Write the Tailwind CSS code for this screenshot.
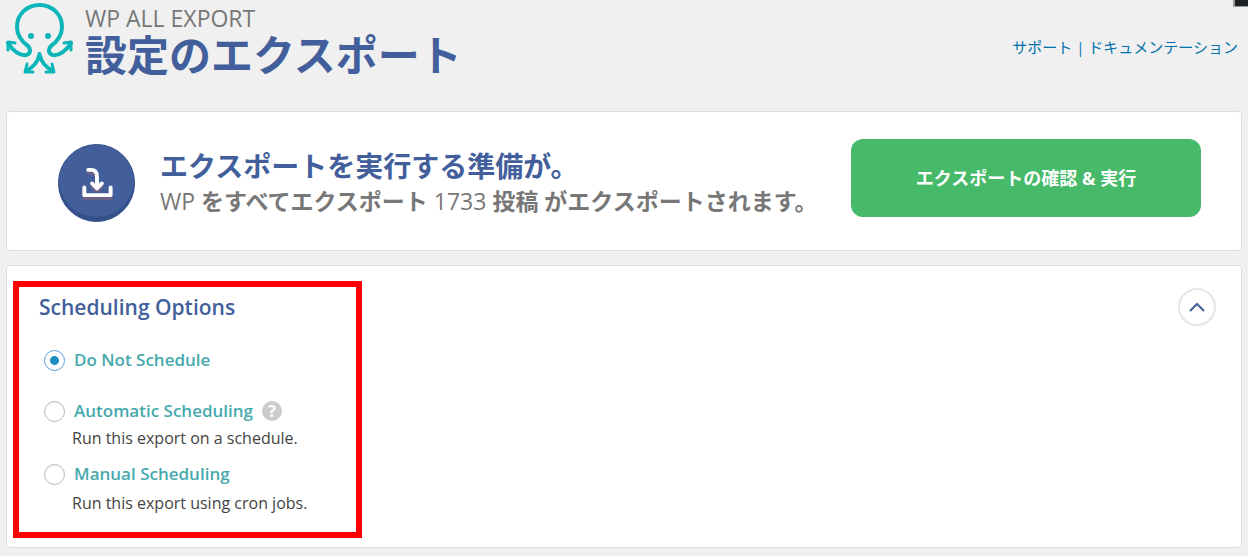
<!DOCTYPE html>
<html lang="ja">
<head>
    <meta charset="UTF-8">
    <meta name="viewport" content="width=device-width, initial-scale=1.0">
    <title>WP All Export</title>
    <script src="https://cdn.jsdelivr.net/npm/@tailwindcss/browser@4"></script>
</head>
<body class="bg-[#f0f0f0] font-['Open_Sans','Noto_Sans_CJK_JP',sans-serif] text-[#444]">
    <div class="relative min-h-screen px-[6px] pb-2 overflow-hidden">
        <!-- Screen options tab corner -->
        <div class="absolute top-0 right-0 w-[15px] h-[7px] bg-[#1d2022] border-l-2 border-b border-[#999]"></div>

        <!-- Header -->
        <header class="flex items-start justify-between h-[111px]">
            <div class="flex items-start gap-[11px]">
                <svg class="w-[68px] h-[74px] shrink-0" viewBox="6 0 68 74" fill="none" stroke="#0cb5b8" stroke-width="4" stroke-linecap="round" stroke-linejoin="round">
                    <path d="M8 43C13 51 20 56 26 55C31 54 31 49 28 46C21 41 17 35 17 27C17 14 27 5 39.500 5C52 5 62 14 62 27C62 35 58 41 51 46C48 49 48 54 53 55C59 56 66 51 71 43"/>
                    <path d="M8 50V42L15 43M71 50V42L64 43" stroke-width="3"/>
                    <path d="M39.500 54C38 62 34 67 26 71M39.500 54C41 62 45 67 53 71"/>
                    <path d="M27 64L25 72H33M52 64L54 72H46" stroke-width="3"/>
                    <circle cx="31" cy="36" r="3" fill="#0cb5b8" stroke="none"/>
                    <circle cx="48" cy="36" r="3" fill="#0cb5b8" stroke="none"/>
                </svg>
                <div class="pt-[6px]">
                    <p class="text-[23px] leading-[24px] text-[#777]">WP ALL EXPORT</p>
                    <h1 class="text-[42px] leading-[50px] font-bold text-[#425f9c]">設定のエクスポート</h1>
                </div>
            </div>
            <div class="pt-9 pr-1 text-[15px] leading-[22px] text-[#0073aa] whitespace-nowrap">
                <a href="#">サポート</a> | <a href="#">ドキュメンテーション</a>
            </div>
        </header>

        <main class="flex flex-col gap-[14px]">
            <!-- Ready to run -->
            <section class="flex items-start h-[140px] pt-[27px] pl-[51px] pr-[40px] bg-white border border-[#ddd] rounded-[4px]">
                <div class="mt-[5px] mr-[25px] w-[77px] h-[78px] shrink-0 rounded-full bg-[#425f9c] border border-[#34508a] shadow-[inset_0_-4px_0_#34508a]">
                    <svg class="size-full" viewBox="0 0 77 77" fill="none" stroke-linecap="round" stroke-linejoin="round">
                        <path d="M30 28H33Q39 28 39 35V46M34 42L39 47L44 42M26 46V54H53V46" stroke="#6b6187" stroke-width="4"/>
                        <path d="M30 25H33Q39 25 39 32V43M34 39L39 44L44 39M26 43V51H53V43" stroke="#fff" stroke-width="4"/>
                    </svg>
                </div>
                <div class="grow pt-[9px] whitespace-nowrap">
                    <h2 class="text-[28px] leading-[36px] font-bold text-[#425f9c]">エクスポートを実行する準備が。</h2>
                    <p class="text-[23px] leading-[34px] font-bold text-[#777]"><span class="font-medium">WP</span> をすべてエクスポート <span class="font-medium">1733</span> 投稿 がエクスポートされます。</p>
                </div>
                <button type="button" class="w-[350px] h-[78px] shrink-0 rounded-[12px] bg-[#46ba69] text-white text-[18px] font-bold">エクスポートの確認 &amp; 実行</button>
            </section>

            <!-- Scheduling -->
            <section class="flex items-start justify-between pl-[6px] pt-[15px] pb-[9px] pr-[25px] bg-white border border-[#ddd] rounded-[4px]">
                <div class="w-[349px] h-[257px] pt-[6px] pl-[19px] border-[6px] border-[#f00]">
                    <h2 class="pl-px text-[21px] leading-[28px] font-semibold text-[#425f9c]">Scheduling Options</h2>
                    <div class="mt-[28px] pl-[6px] text-[17px] leading-[22px] font-semibold text-[#46aaad]">
                        <label class="flex items-center gap-[9px]">
                            <input type="radio" name="schedule" checked class="appearance-none size-[21px] rounded-full border border-[#5b9dd9] bg-white checked:bg-[radial-gradient(circle,#1e8cbe_4px,white_5px)]">
                            Do Not Schedule
                        </label>
                        <div class="mt-[29px] flex items-center gap-[9px]">
                            <label class="flex items-center gap-[9px]">
                                <input type="radio" name="schedule" class="appearance-none size-[21px] rounded-full border border-[#b4b9be] bg-white shadow-[inset_0_1px_2px_#0001]">
                                Automatic Scheduling
                            </label>
                            <a href="#" class="flex items-center justify-center size-[20px] rounded-full bg-[#ccc] text-white text-[16px] font-bold">?</a>
                        </div>
                        <p class="mt-[5px] pl-[28px] text-[16px] font-normal text-[#444]">Run this export on a schedule.</p>
                        <label class="mt-[14px] flex items-center gap-[9px]">
                            <input type="radio" name="schedule" class="appearance-none size-[21px] rounded-full border border-[#b4b9be] bg-white shadow-[inset_0_1px_2px_#0001]">
                            Manual Scheduling
                        </label>
                        <p class="mt-[7px] pl-[28px] text-[16px] font-normal text-[#444]">Run this export using cron jobs.</p>
                    </div>
                </div>
                <button type="button" aria-label="Collapse" class="mt-[7px] flex items-center justify-center size-[38px] rounded-full border-2 border-[#e5e5e5] bg-white">
                    <svg class="w-[16px] h-[10px]" viewBox="0 0 16 10" fill="none" stroke="#425f9c" stroke-width="2">
                        <path d="M1 9L8 2L15 9"/>
                    </svg>
                </button>
            </section>
        </main>
    </div>
</body>
</html>
